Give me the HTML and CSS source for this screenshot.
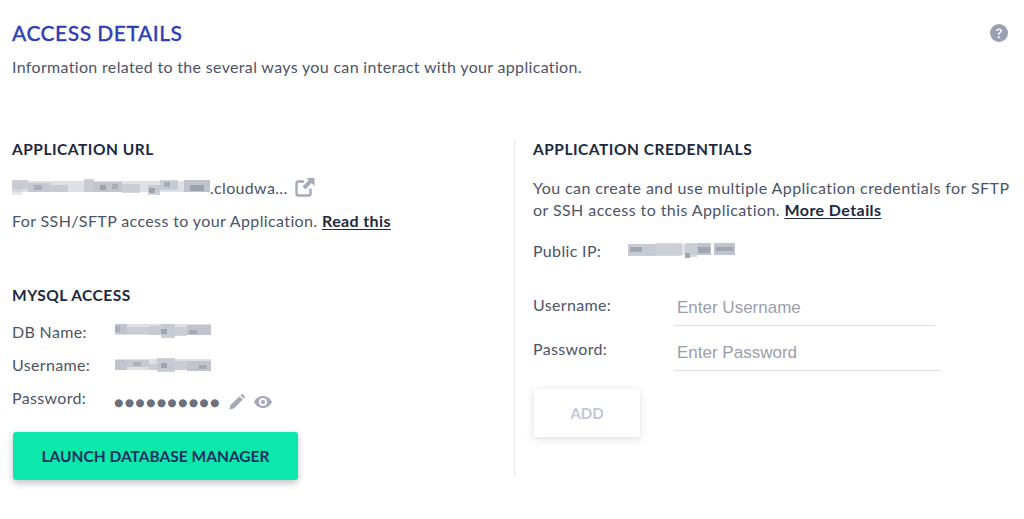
FILE: index.html
```html
<!DOCTYPE html>
<html lang="en">
<head>
<meta charset="utf-8">
<title>Access Details</title>
<link rel="stylesheet" href="styles.css">
</head>
<body>
<main class="page">
  <header class="top">
    <div>
      <h1 class="title">ACCESS DETAILS</h1>
      <p class="lead">Information related to the several ways you can interact with your application.</p>
    </div>
    <svg class="help" viewBox="0 0 18 18" aria-hidden="true"><circle cx="9" cy="9" r="9" fill="#9a9fb3"/><path d="M6.100 7.100C6.200 5.400 7.400 4.400 9.100 4.400c1.700 0 2.900 1 2.900 2.400 0 1.100-.6 1.700-1.400 2.300-.8.600-1 .9-1 1.700H8c0-1.300.4-1.900 1.300-2.600.7-.5 1-.8 1-1.300 0-.6-.5-1-1.200-1-.8 0-1.300.5-1.400 1.200z" fill="#fff"/><circle cx="8.800" cy="13.300" r="1.100" fill="#fff"/></svg>
  </header>
  <div class="columns">
    <section class="col-left">
      <h2 class="heading">APPLICATION URL</h2>
      <div class="url-row">
        <svg class="mosaic mosaic-url" viewBox="0 0 198 18" aria-hidden="true">
          <rect y="3" width="198" height="11" fill="#dfe0e6"/>
          <g fill="#c2c4cd">
            <rect x="0" y="2" width="16" height="9" opacity=".75"/><rect x="0" y="11" width="10" height="6" opacity=".4"/>
            <rect x="16" y="5" width="22" height="9" opacity=".85"/><rect x="38" y="7" width="18" height="7" opacity=".8"/>
            <rect x="72" y="1" width="10" height="13" opacity=".8"/><rect x="82" y="4" width="28" height="10"/>
            <rect x="110" y="6" width="18" height="9" opacity=".7"/><rect x="136" y="7" width="12" height="10" opacity=".8"/>
            <rect x="148" y="2" width="18" height="10" opacity=".75"/><rect x="172" y="2" width="26" height="12"/>
          </g>
          <g fill="#9ea1ae">
            <rect x="22" y="7" width="8" height="5" opacity=".7"/><rect x="88" y="7" width="6" height="5"/>
            <rect x="100" y="6" width="6" height="5" opacity=".7"/><rect x="137" y="10" width="6" height="5"/>
            <rect x="152" y="4" width="6" height="5" opacity=".8"/><rect x="178" y="7" width="14" height="6"/>
          </g>
        </svg>
        <span class="url-text">.cloudwa...</span>
        <svg class="ext" viewBox="0 0 20 20" aria-hidden="true"><path d="M9 4.500H3.200A1.700 1.700 0 0 0 1.500 6.200v10.600a1.700 1.700 0 0 0 1.700 1.700h10.600a1.700 1.700 0 0 0 1.700-1.700V11.500" fill="none" stroke="#a4a8bb" stroke-width="2.400"/><path d="M11.500 1h8v8l-2.900-2.900-6.200 6.400-2.900-2.900 6.300-6.300z" fill="#a4a8bb"/></svg>
      </div>
      <p class="text text-ssh">For SSH/SFTP access to your Application. <a class="link" href="#">Read this</a></p>
      <h2 class="heading heading-mysql">MYSQL ACCESS</h2>
      <dl class="rows">
        <div class="row row-db">
          <dt class="row-label">DB Name:</dt>
          <dd class="row-value"><svg class="mosaic mosaic-db" viewBox="0 0 96 18" aria-hidden="true"><rect y="2" width="96" height="11" fill="#dfe0e6"/><g fill="#c2c4cd"><rect x="0" y="2" width="12" height="10"/><rect x="12" y="5" width="22" height="7" opacity=".7"/><rect x="34" y="4" width="12" height="9" opacity=".8"/><rect x="46" y="2" width="14" height="14" opacity=".85"/><rect x="60" y="5" width="12" height="9" opacity=".7"/><rect x="72" y="3" width="24" height="10"/></g><g fill="#a0a3b2"><rect x="0" y="4" width="5" height="6" opacity=".7"/><rect x="46" y="7" width="6" height="5"/><rect x="74" y="8" width="8" height="4" opacity=".8"/></g></svg></dd>
        </div>
        <div class="row">
          <dt class="row-label">Username:</dt>
          <dd class="row-value"><svg class="mosaic mosaic-db" viewBox="0 0 96 18" aria-hidden="true"><rect y="3" width="96" height="11" fill="#dfe0e6"/><g fill="#c2c4cd"><rect x="0" y="4" width="12" height="10"/><rect x="12" y="4" width="22" height="7" opacity=".8"/><rect x="34" y="8" width="12" height="6" opacity=".7"/><rect x="42" y="2" width="18" height="14" opacity=".8"/><rect x="60" y="5" width="12" height="9" opacity=".7"/><rect x="72" y="5" width="24" height="10"/></g><g fill="#a0a3b2"><rect x="18" y="6" width="8" height="4" opacity=".7"/><rect x="46" y="7" width="6" height="5"/><rect x="84" y="9" width="8" height="4" opacity=".8"/></g></svg></dd>
        </div>
        <div class="row row-password">
          <dt class="row-label">Password:</dt>
          <dd class="row-value row-value-pass">
            <span class="dots">●●●●●●●●●●</span>
            <svg class="pencil" viewBox="0 0 16 16" aria-hidden="true"><path d="M0.500 15.500l.9-4.300 9-9 3.400 3.400-9 9zM11.400 1.200l1-1a1 1 0 0 1 1.400 0l2 2a1 1 0 0 1 0 1.400l-1 1z" fill="#a4a8b8"/></svg>
            <svg class="eye" viewBox="0 0 18 12" aria-hidden="true"><path fill-rule="evenodd" d="M9 0c4 0 7.300 2.500 9 6-1.700 3.500-5 6-9 6s-7.300-2.500-9-6c1.700-3.500 5-6 9-6zm0 2a4 4 0 1 0 0 8 4 4 0 0 0 0-8zm0 2a2 2 0 1 1 0 4 2 2 0 0 1 0-4z" fill="#a4a8b8"/></svg>
          </dd>
        </div>
      </dl>
      <button class="launch" type="button">LAUNCH DATABASE MANAGER</button>
    </section>
    <section class="col-right">
      <h2 class="heading">APPLICATION CREDENTIALS</h2>
      <p class="text text-cred">You can create and use multiple Application credentials for SFTP or SSH access to this Application. <a class="link" href="#">More Details</a></p>
      <div class="ip-row">
        <span class="ip-label">Public IP:</span>
        <svg class="mosaic mosaic-ip" viewBox="0 0 107 18" aria-hidden="true"><rect y="3" width="83" height="11" fill="#e2e3e8"/><g fill="#c2c4cd"><rect x="0" y="3" width="28" height="12" opacity=".8"/><rect x="28" y="2" width="26" height="13" opacity=".65"/><rect x="57" y="2" width="12" height="14" opacity=".7"/><rect x="69" y="2" width="14" height="12"/><rect x="86" y="2" width="21" height="12"/></g><g fill="#a2a5b2"><rect x="2" y="6" width="12" height="5"/><rect x="70" y="6" width="12" height="6"/><rect x="57" y="12" width="5" height="5"/><rect x="88" y="6" width="17" height="4"/></g></svg>
      </div>
      <form class="form">
        <div class="field field-user">
          <label class="field-label" for="u">Username:</label>
          <input class="input input-user" id="u" type="text" placeholder="Enter Username">
        </div>
        <div class="field field-pass">
          <label class="field-label" for="p">Password:</label>
          <input class="input input-pass" id="p" type="text" placeholder="Enter Password">
        </div>
        <button class="add" type="button">ADD</button>
      </form>
    </section>
  </div>
</main>
</body>
</html>
```
FILE: styles.css
```css
* { box-sizing: border-box; }
html, body { margin: 0; padding: 0; background: #fff; }
body {
  width: 1024px;
  height: 519px;
  overflow: hidden;
  font-family: "Lato", "Open Sans", sans-serif;
  color: #4d5468;
}
.page { padding: 20px 0 0 12px; }
.top { display: flex; justify-content: space-between; align-items: flex-start; padding-right: 16px; }
.title {
  margin: 0;
  font-size: 21px;
  line-height: 25px;
  font-weight: 500;
  color: #2f3fb5;
  letter-spacing: .5px;
  -webkit-text-stroke: .3px #2f3fb5;
}
.lead {
  margin: 10px 0 0;
  font-size: 16px;
  line-height: 24px;
  letter-spacing: .33px;
}
.help { width: 18px; height: 18px; margin-top: 4px; }
.columns { display: flex; margin-top: 61px; }
.col-left { flex: none; width: 503px; height: 336px; border-right: 1px solid #e6e7ec; }
.col-right { padding: 0 0 0 18px; flex: 1; min-width: 0; }
.heading {
  margin: -1px 0 0;
  font-size: 15.500px;
  line-height: 20px;
  font-weight: 700;
  color: #20293f;
  letter-spacing: .5px;
}
.text {
  margin: 0;
  font-size: 16px;
  line-height: 24px;
  letter-spacing: .33px;
}
.link { color: #20293f; font-weight: 700; text-decoration: underline; text-underline-offset: 2px; }
.url-row { display: flex; align-items: center; height: 20px; margin-top: 18px; }
.mosaic { display: block; filter: blur(.7px); }
.mosaic-url { width: 198px; height: 18px; }
.mosaic-db { width: 96px; height: 18px; }
.mosaic-ip { flex: none; width: 107px; height: 18px; margin-left: 27px; }
.url-text { font-size: 16px; letter-spacing: .33px; }
.ext { width: 20px; height: 20px; margin-left: 7px; }
.text-ssh { margin-top: 12px; letter-spacing: .38px; }
.heading-mysql { margin-top: 52px; }
.rows { margin: 9px 0 0; }
.row { display: flex; align-items: center; height: 33px; }
.row-db { height: 34px; }
.row-label { flex: none; width: 103px; font-size: 16px; letter-spacing: .33px; }
.row-value { margin: 0; }
.row-password { height: 34px; align-items: flex-start; padding-top: 7px; }
.row-value-pass { display: flex; align-items: center; margin-top: 5px; }
.dots { font-size: 10.500px; line-height: 18px; letter-spacing: 1.500px; color: #6c6f7c; margin-left: -1px; font-family: "DejaVu Sans", sans-serif; }
.pencil { width: 16px; height: 16px; margin-left: 8px; }
.eye { width: 18px; height: 12px; margin-left: 9px; }
.launch {
  display: block;
  width: 285px;
  height: 48px;
  margin: 17px 0 0 1px;
  border: 0;
  border-radius: 3px;
  background: #0ce8ac;
  color: #17305f;
  font: 700 15.500px "Lato", sans-serif;
  box-shadow: 0 3px 7px rgba(40, 50, 70, .3);
}
.text-cred { margin-top: 18px; width: 484px; line-height: 22px; letter-spacing: .42px; }
.ip-row { display: flex; align-items: center; height: 20px; margin-top: 19px; }
.ip-label { flex: none; width: 68px; font-size: 16px; letter-spacing: .33px; white-space: nowrap; }
.form { margin-top: 35px; }
.field { display: flex; }
.field-label { flex: none; width: 141px; font-size: 16px; line-height: 20px; letter-spacing: .33px; }
.field-pass .field-label { margin-top: -1px; }
.input {
  height: 40px;
  padding: 4px 3px 0;
  border: 0;
  border-bottom: 1px solid #dcdde3;
  outline: 0;
  font: 17px "Liberation Sans", Arial, sans-serif;
  color: #4d5468;
  background: transparent;
}
.input::placeholder { color: #9a9eab; opacity: 1; }
.input-user { width: 261px; margin-top: -9px; }
.input-pass { width: 266px; margin-top: -9px; }
.field-pass { margin-top: 14px; }
.add {
  display: block;
  width: 106px;
  height: 48px;
  margin: 18px 0 0 1px;
  border: 0;
  border-radius: 3px;
  background: #fff;
  color: #c3c5d8;
  font: 700 15px "Lato", sans-serif;
  box-shadow: 0 2px 8px rgba(40, 50, 70, .16);
}
```
